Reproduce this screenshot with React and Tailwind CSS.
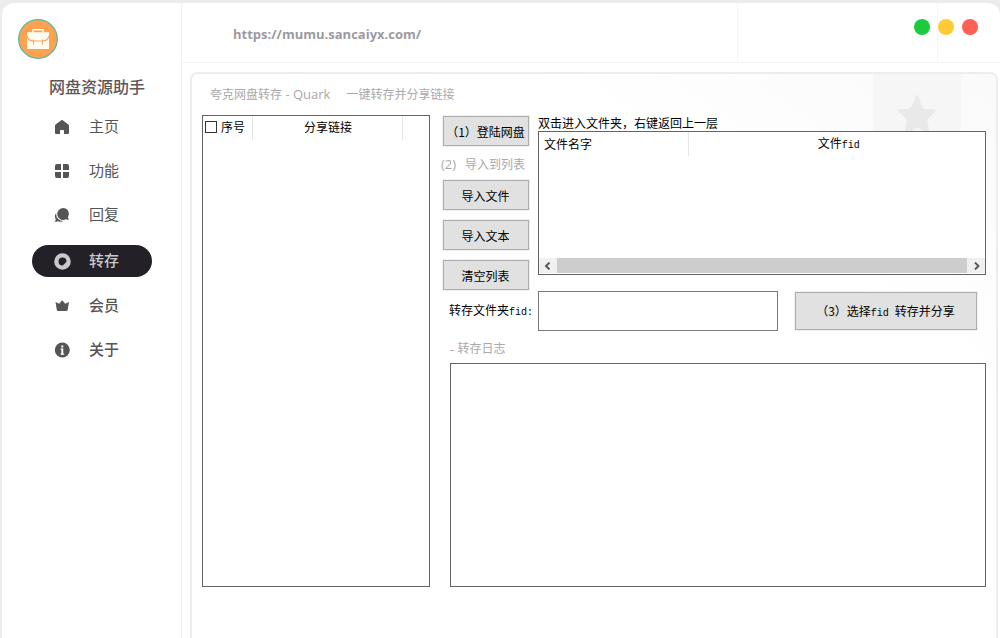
import React from "react";

const SONG = "font-['Noto_Sans_CJK_SC',sans-serif] text-[12px] leading-4 text-black";
const YAHEI = "font-['Open_Sans','Noto_Sans_CJK_SC',sans-serif] text-[12px] leading-4 text-[#a9a9ad]";

function HomeIcon() {
  return (
    <svg width="16" height="16" viewBox="0 0 16 16" fill="currentColor" aria-hidden="true">
      <path d="M8 .8 1.600 5.400Q1 5.900 1 6.700V14q0 1 1 1h4v-3.300q0-.7.700-.7h2.600q.7 0 .7.700V15h4q1 0 1-1V6.700q0-.8-.6-1.300Z" />
    </svg>
  );
}
function GridIcon() {
  return (
    <svg width="16" height="16" viewBox="0 0 16 16" fill="currentColor" aria-hidden="true">
      <path d="M3 1h4v6H1V3q0-2 2-2ZM9 1h4q2 0 2 2v4H9ZM1 9h6v6H3q-2 0-2-2ZM9 9h6v4q0 2-2 2H9Z" />
    </svg>
  );
}
function ChatIcon() {
  return (
    <svg width="16" height="16" viewBox="0 0 16 16" fill="currentColor" aria-hidden="true">
      <path d="M9 1a6 6 0 0 1 5 9.300l.8 2.700-2.800-.7A6 6 0 1 1 9 1Z" />
      <path d="M2.200 6A7.100 7.100 0 0 0 9.600 14 5.500 5.500 0 0 1 4.500 14.300L1 15l.8-2.800A5.300 5.300 0 0 1 2.200 6Z" />
    </svg>
  );
}
function RingIcon() {
  return (
    <svg width="18" height="18" viewBox="0 0 18 18" aria-hidden="true">
      <path
        d="M9.500 1.200a8.300 8.300 0 1 1 0 16.600 8.300 8.300 0 0 1 0-16.600Zm0 4.300a4 4 0 1 0 0 8 1 1 0 0 0 .8-.6l2.500-2.500a1 1 0 0 0 .7-.9 4 4 0 0 0-4-4Z"
        fill="currentColor"
        fillRule="evenodd"
      />
    </svg>
  );
}
function CrownIcon() {
  return (
    <svg width="16" height="16" viewBox="0 0 16 16" fill="currentColor" aria-hidden="true">
      <path d="M1.500 4 5.200 5.800 8.200 2.200l3 3.600L15 4l-1.300 7.800q-.2 1.200-1.200 1.200H4q-1 0-1.200-1.200Z" />
    </svg>
  );
}
function InfoIcon() {
  return (
    <svg width="16" height="16" viewBox="0 0 16 16" aria-hidden="true">
      <circle cx="8.300" cy="8" r="7.500" fill="currentColor" />
      <path d="M7.300 3.400h2v2h-2ZM6.600 6.600h2.700v5h.8v1.200H6.600v-1.200h.7V7.800h-.7Z" fill="#fff" />
    </svg>
  );
}

const NAV = [
  { label: "主页", Icon: HomeIcon },
  { label: "功能", Icon: GridIcon },
  { label: "回复", Icon: ChatIcon },
  { label: "转存", Icon: RingIcon, active: true },
  { label: "会员", Icon: CrownIcon, strong: true },
  { label: "关于", Icon: InfoIcon, strong: true },
];

function Logo() {
  return (
    <svg width="40" height="40" viewBox="0 0 40 40" className="ml-4" role="img" aria-label="网盘资源助手">
      <circle cx="20" cy="20" r="19.300" fill="#fca251" stroke="#5bb8a0" strokeWidth="1.300" />
      <path d="M15 14v-3.200h10V14" fill="none" stroke="#fffdf2" strokeWidth="1.400" strokeLinejoin="round" />
      <path d="M9 13.200h22V30H9Z" fill="#fffdf2" />
      <path d="M9 17q1.500 5 6 5h10q4.500 0 6-5M15.500 20.500v5M24.500 20.500v5" fill="none" stroke="#f5a55c" strokeWidth="1.100" />
    </svg>
  );
}

function Sidebar() {
  return (
    <aside className="w-[180px] shrink-0 border-r border-[#f1f1f1] pt-4">
      <Logo />
      <h1 className="mt-[15px] pl-[47px] font-['Noto_Sans_CJK_SC',sans-serif] text-[16px] leading-6 font-medium text-[#5f5656]">
        网盘资源助手
      </h1>
      <nav className="mt-[13px] flex flex-col gap-3 px-[30px] font-['Noto_Sans_CJK_SC',sans-serif] text-[15px] text-[#555558]">
        {NAV.map(({ label, Icon, active, strong }) => (
          <a
            key={label}
            href="#"
            aria-current={active ? "page" : undefined}
            className={
              "flex h-8 w-[120px] items-center gap-[18px] rounded-full pl-[21px] " +
              (active ? "mt-0.5 mb-px bg-[#232127] font-medium text-[#c9c8cd]" : strong ? "font-medium" : "")
            }
          >
            <span className="flex w-[18px] justify-center">
              <Icon />
            </span>
            <span className="pb-0.5">{label}</span>
          </a>
        ))}
      </nav>
    </aside>
  );
}

function Header() {
  return (
    <header className="relative flex h-[60px] items-start justify-between border-b border-[#f3f3f3] pr-[22px] pl-[51px]">
      <div className="absolute inset-y-0 right-[62px] w-[201px] border-x border-[#f7f7f7]" />
      <a
        href="https://mumu.sancaiyx.com/"
        className="pt-[21px] font-['Open_Sans',sans-serif] text-[13px] leading-5 font-bold text-[#9b9b9f]"
      >
        https://mumu.sancaiyx.com/
      </a>
      <div className="relative flex gap-2 pt-4">
        <button type="button" aria-label="最小化" className="size-4 rounded-full bg-[#1bcb3d]" />
        <button type="button" aria-label="最大化" className="size-4 rounded-full bg-[#ffcb35]" />
        <button type="button" aria-label="关闭" className="size-4 rounded-full bg-[#ff6052]" />
      </div>
    </header>
  );
}

function PushButton({ children, className = "h-[30px]" }) {
  return (
    <button
      type="button"
      className={`${SONG} flex w-full items-center justify-center border border-[#adadad] bg-[#e1e1e1] pt-0.5 pr-px whitespace-nowrap ring-1 ring-[#f0f0f0] ${className}`}
    >
      {children}
    </button>
  );
}

const Fid = ({ children }) => <span className="font-['Liberation_Mono',monospace] text-[10px]">{children}</span>;
const Latin = ({ children }) => <span className="text-[13px] whitespace-pre">{children}</span>;

function LinkTable() {
  return (
    <div className="h-[472px] w-[228px] shrink-0 border border-[#646464] bg-white">
      <table className={`${SONG} w-full table-fixed border-collapse`}>
        <thead>
          <tr className="h-6">
            <th className="w-[49px] border-r border-[#e5e5e5] p-0 font-normal">
              <label className="flex items-center gap-1 pb-0.5 pl-0.5">
                <input type="checkbox" className="size-3 appearance-none border border-[#333] bg-white" />
                序号
              </label>
            </th>
            <th className="border-r border-[#e5e5e5] p-0 pb-0.5 pl-0.5 font-normal">分享链接</th>
            <th className="w-[27px] p-0" />
          </tr>
        </thead>
        <tbody />
      </table>
    </div>
  );
}

function ScrollArrow({ label, d }) {
  return (
    <button type="button" aria-label={label} className="flex w-[18px] items-center justify-center bg-[#f0f0f0] text-[#505050]">
      <svg width="8" height="8" viewBox="0 0 8 8" fill="none" stroke="currentColor" strokeWidth="1.800" aria-hidden="true">
        <path d={d} />
      </svg>
    </button>
  );
}

function FileTable() {
  return (
    <div className="flex h-36 flex-col justify-between border border-[#646464] bg-white">
      <table className={`${SONG} w-full table-fixed border-collapse`}>
        <thead>
          <tr className="h-6">
            <th className="w-[149px] border-r border-[#e5e5e5] p-0 pl-[5px] text-left font-normal">文件名字</th>
            <th className="p-0 pl-1 font-normal">
              文件<Fid>fid</Fid>
            </th>
          </tr>
        </thead>
        <tbody />
      </table>
      <div className="mb-px flex h-[15px]">
        <ScrollArrow label="向左滚动" d="M5.500.5 2 4l3.500 3.500" />
        <div className="flex-1 bg-[#cdcdcd]" />
        <ScrollArrow label="向右滚动" d="M3 .5 6.500 4 3 7.500" />
      </div>
    </div>
  );
}

function Watermark() {
  return (
    <div className="absolute inset-0 bg-[linear-gradient(215deg,#fafafa_0px,#fcfcfc_120px,#ffffff_260px)]">
      <svg width="88" height="120" viewBox="0 0 88 120" className="absolute top-0 right-[35px]" aria-hidden="true">
        <path d="M0 0h88v120H0Z" fill="#f6f6f6" />
        <path
          d="M44 21q1 0 1.600 2l3 8.500q1 3 4 3.500l8.600.6q2.500.5.700 2.500l-6 5.400q-2 2-1.400 5L58 64H31l2.500-15.500q.5-3-1.500-5l-6.300-5.400q-1.700-2 .8-2.500l8.500-.6q3-.5 4.100-3.500l3.300-8.500q.600-2 1.600-2Z"
          fill="#e9e9e9"
        />
        <circle cx="44.500" cy="59" r="5" fill="#f6f6f6" />
      </svg>
    </div>
  );
}

function TransferPanel() {
  return (
    <section className="relative flex-1 overflow-hidden rounded-t-lg border-2 border-b-0 border-[#ededed] bg-white">
      <Watermark />
      <div className="relative px-2.5">
        <h2 className={`${YAHEI} flex h-[41px] items-center gap-4 pl-2 font-normal`}>
          <span>
            夸克网盘转存<Latin> - Quark</Latin>
          </span>
          <span>一键转存并分享链接</span>
        </h2>
        <div className="flex gap-[11px]">
          <LinkTable />
          <div className="flex min-w-0 flex-1 flex-col">
            <div className="flex gap-[9px]">
              <div className="flex w-[88px] shrink-0 flex-col gap-2.5 pt-px pl-0.5">
                <PushButton>（1）登陆网盘</PushButton>
                <p className={`${YAHEI} -ml-0.5 flex h-[14px] items-baseline justify-between pr-1`}>
                  <Latin>(2)</Latin>
                  <span>导入到列表</span>
                </p>
                <PushButton>导入文件</PushButton>
                <PushButton>导入文本</PushButton>
                <PushButton>清空列表</PushButton>
              </div>
              <div className="min-w-0 flex-1">
                <p className={SONG}>双击进入文件夹，右键返回上一层</p>
                <FileTable />
              </div>
            </div>
            <div className="flex items-center pt-px pr-[9px]">
              <label htmlFor="fid" className={`${SONG} w-[97px] shrink-0 pl-2 whitespace-nowrap`}>
                转存文件夹<Fid>fid:</Fid>
              </label>
              <input
                id="fid"
                type="text"
                className={`${SONG} h-10 w-[240px] min-w-0 border border-[#7a7a7a] bg-white px-1 outline-none`}
              />
              <div className="ml-[17px] min-w-[150px] flex-1">
                <PushButton className="h-[38px]">
                  <span>
                    （3）选择<Fid>fid </Fid>转存并分享
                  </span>
                </PushButton>
              </div>
            </div>
            <label htmlFor="log" className={`${YAHEI} flex h-8 items-center pt-1 pl-[9px]`}>
              <Latin>- </Latin>转存日志
            </label>
            <textarea
              id="log"
              className={`${SONG} ml-[9px] h-[224px] resize-none border border-[#646464] bg-white p-1 outline-none`}
            />
          </div>
        </div>
      </div>
    </section>
  );
}

export default function App() {
  return (
    <div className="flex min-h-screen bg-[#ececec] pt-[3px] pl-0.5">
      <div className="flex flex-1 rounded-t-xl bg-white">
        <Sidebar />
        <main className="flex min-w-0 flex-1 flex-col">
          <Header />
          <div className="flex flex-1 flex-col pt-[9px] pr-0.5 pl-2">
            <TransferPanel />
          </div>
        </main>
      </div>
    </div>
  );
}
